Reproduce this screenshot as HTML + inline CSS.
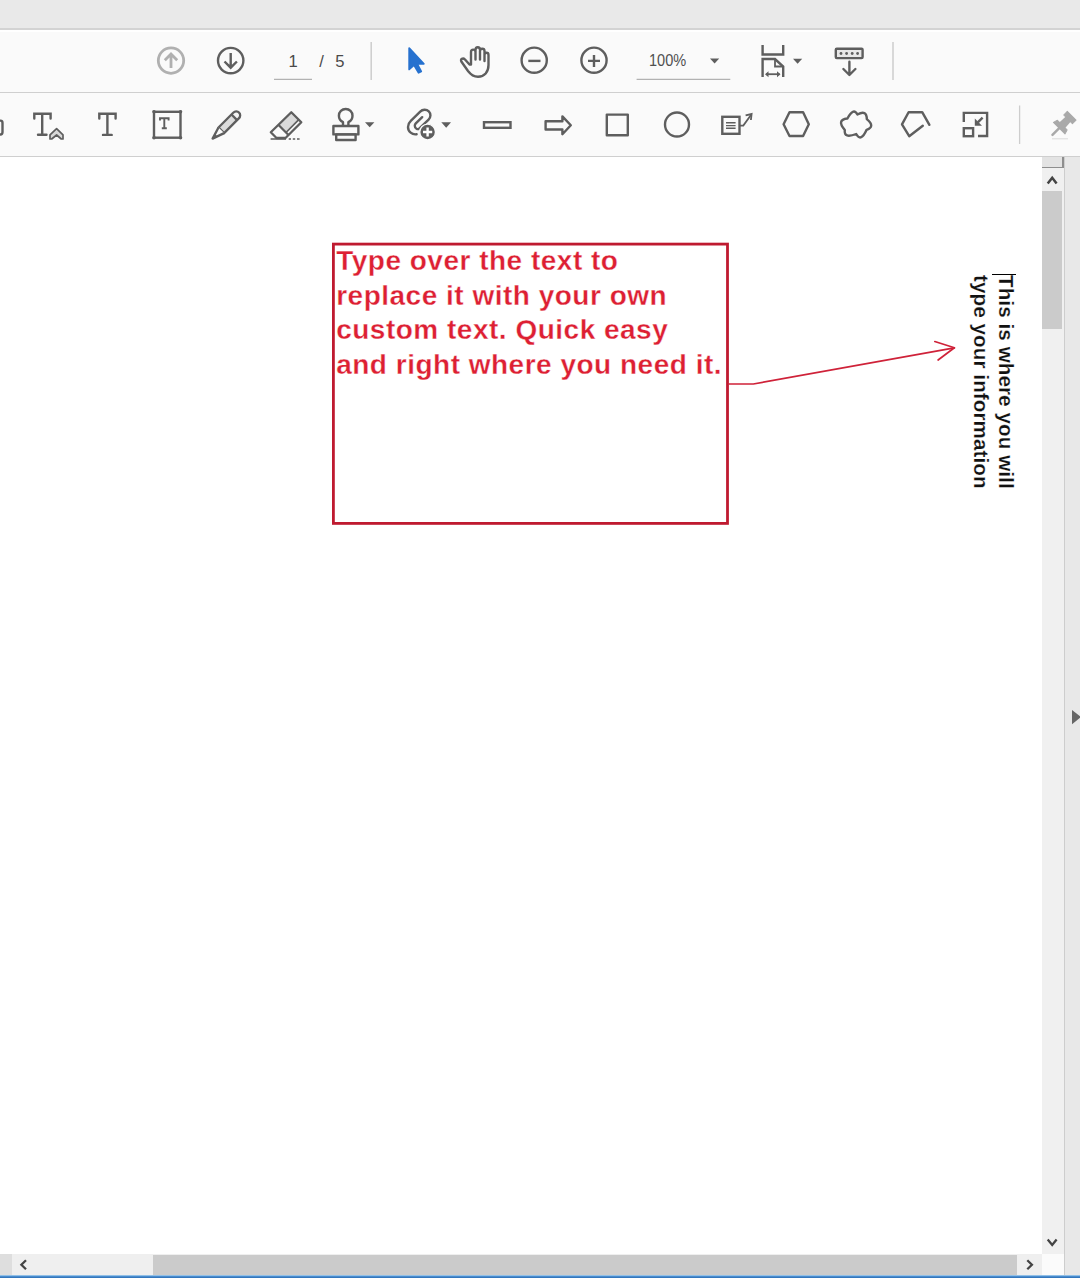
<!DOCTYPE html>
<html><head><meta charset="utf-8">
<style>
html,body{margin:0;padding:0;width:1080px;height:1278px;overflow:hidden;background:#fff;font-family:"Liberation Sans",sans-serif;}
.a{position:absolute;}
#top{left:0;top:0;width:1080px;height:28px;background:#e9e9e9;}
#tb1{left:0;top:28px;width:1080px;height:64px;background:#fafafa;border-top:2px solid #d3d3d3;box-sizing:border-box;}
#tb2{left:0;top:92px;width:1080px;height:65px;background:#fafafa;border-top:1.5px solid #cfcfcf;border-bottom:1.5px solid #cfcfcf;box-sizing:border-box;}
svg{position:absolute;left:0;top:0;overflow:visible;}
.ic{fill:none;stroke:#5e5e5e;stroke-width:2.4;}
.txt{color:#474747;font-size:16px;}
</style></head><body>
<div id="top" class="a"></div>
<div id="tb1" class="a"></div>
<div class="a" style="left:0;top:30px;width:1080px;height:1.5px;background:#fff;"></div>
<div id="tb2" class="a"></div>

<!-- toolbar icons -->
<svg width="1080" height="160" viewBox="0 0 1080 160">
  <!-- up arrow disabled -->
  <g stroke="#b0b0b0" stroke-width="2.8" fill="none">
    <circle cx="171" cy="60.6" r="12.7"/>
    <path d="M171 54.5v13.5M164.8 60.2l6.2-6.2 6.2 6.2"/>
  </g>
  <!-- down arrow -->
  <g class="ic" stroke-width="2.8" stroke="#575757">
    <circle cx="230.7" cy="60.6" r="12.7"/>
    <path d="M230.7 53v14M224.5 61.5l6.2 6.2 6.2-6.2"/>
  </g>
  <!-- page field underline -->
  <path d="M274 79.3H312" stroke="#a0a0a0" stroke-width="1"/>
  <!-- separator -->
  <path d="M371.2 42V80" stroke="#cdcdcd" stroke-width="1.5"/>
  <!-- blue pointer -->
  <path d="M409.2 48.2V69.4L414 65L418.6 72.8L421.2 71.5L417.2 63.8H423.8Z" fill="#2671cf" stroke="#2671cf" stroke-width="1.8" stroke-linejoin="round"/>
  <!-- hand -->
  <g class="ic" stroke-width="2.3" stroke-linecap="round" stroke-linejoin="round">
    <path d="M469.5 64.5 L465 59.5 C463 57.5 459.8 59 461.5 61.8 L468 71 C471 75 474 76.7 478 76.7 C484.5 76.7 488.5 72 488.5 65 V55 C488.5 52 484.5 52 484.5 55 V61 M484.5 61 V51 C484.5 48 480 48 480 51 V59.5 M480 50 C480 46.3 475.5 46.3 475.5 50 V59.5 M475.5 52 C475.5 48.8 471 48.8 471 52 V64.5"/>
  </g>
  <!-- zoom out -->
  <g class="ic" stroke-width="2.8">
    <circle cx="534.2" cy="60.2" r="12.6"/>
    <path d="M528.3 60.9H540.5"/>
  </g>
  <!-- zoom in -->
  <g class="ic" stroke-width="2.8">
    <circle cx="594" cy="60.2" r="12.6"/>
    <path d="M588 60.9H600M594 55V67"/>
  </g>
  <!-- zoom dropdown -->
  <path d="M710 58.4H719.2L714.6 63.6Z" fill="#5e5e5e"/>
  <path d="M636.6 79.3H730.3" stroke="#a0a0a0" stroke-width="1"/>
  <!-- page display icon -->
  <g class="ic" stroke-width="2.4">
    <path d="M762.6 45V54.5H783.2V45"/>
    <path d="M762.6 77V59H775L783.2 66.5V77"/>
    <path d="M775 59V66.5H783.2" stroke-width="1.8"/>
    <path d="M766 74.2H779.5" stroke-width="1.8"/>
  </g>
  <path d="M765 74.2l3.5-3v6z M780.5 74.2l-3.5-3v6z" fill="#5e5e5e"/>
  <path d="M793 58.8H802.2L797.6 63.8Z" fill="#5e5e5e"/>
  <!-- scroll icon -->
  <g class="ic" stroke-width="2.5" stroke-linecap="round" stroke-linejoin="round">
    <rect x="835.8" y="48.8" width="26.8" height="9.3" rx="1" fill="#e8e8e8"/>
    <path d="M849.4 61.8V74.6M843.4 69l6 6 6-6"/>
  </g>
  <g fill="#5e5e5e"><circle cx="841" cy="53.5" r="1.4"/><circle cx="846.6" cy="53.5" r="1.4"/><circle cx="852.2" cy="53.5" r="1.4"/><circle cx="857.6" cy="53.5" r="1.4"/></g>
  <path d="M893 42V80" stroke="#cdcdcd" stroke-width="1.5"/>

  <!-- ===== row 2 ===== -->
  <!-- partial icon at left edge -->
  <path d="M-3 120.6H0.5C2 120.6 2.5 121.6 2.5 123.1V132C2.5 133.5 2 134.5 0.5 134.5H-3" class="ic" stroke-width="2.7"/>
  <!-- T with caret -->
  <g class="ic" stroke-width="2.6">
    <path d="M34.3 118.6V113.8H50.6V118.6M42.2 113.8V134.7M38 134.7H46.5" stroke-linecap="round"/>
  </g>
  <path d="M50 139V134.9L56.6 128.7L63 134.9V139H61.3L56.6 135L51.7 139Z" fill="#d8d8d8" stroke="#5e5e5e" stroke-width="1.7" stroke-linejoin="round"/>
  <!-- T -->
  <g class="ic" stroke-width="2.6">
    <path d="M99.3 118.6V113.8H115.6V118.6M107.4 113.8V134.9M103 134.9H111.7" stroke-linecap="round"/>
  </g>
  <!-- textbox -->
  <g class="ic" stroke-width="2.4">
    <rect x="154" y="111.8" width="26.5" height="25.9"/>
    <path d="M160 120.5V118.3H168.6V120.5M164.3 118.3V128.3M161.8 128.3H166.8" stroke-width="1.9"/>
  </g>
  <g fill="#5e5e5e"><circle cx="154" cy="111.8" r="1.8"/><circle cx="180.5" cy="111.8" r="1.8"/><circle cx="154" cy="137.7" r="1.8"/><circle cx="180.5" cy="137.7" r="1.8"/></g>
  <!-- pencil -->
  <path d="M218.5 127.5L233.2 112.8C235 111 237.6 111 239 112.6C240.6 114 240.6 116.6 238.8 118.4L224.1 133.1Z" fill="#dcdcdc"/>
  <path d="M231.5 114.5L233.2 112.8C235 111 237.6 111 239 112.6C240.6 114 240.6 116.6 238.8 118.4L237.1 120.1Z" fill="#f4f4f4"/>
  <g stroke="#5e5e5e" stroke-width="2.3" stroke-linejoin="round" fill="none">
    <path d="M218.5 127.5L233.2 112.8C235 111 237.6 111 239 112.6C240.6 114 240.6 116.6 238.8 118.4L224.1 133.1Z"/>
    <path d="M218.5 127.5L212.6 138.6L224.1 133.1" fill="#fafafa"/>
    <path d="M231.5 114.5L237.1 120.1"/>
  </g>
  <path d="M212.6 138.6L215 134L217.2 136.2Z" fill="#5e5e5e"/>
  <!-- eraser -->
  <path d="M278.3 124.8L291.3 112.2L298.8 119.7L286 132.5Z" fill="#dadada"/>
  <g stroke="#5e5e5e" stroke-width="2.3" stroke-linejoin="round" fill="none">
    <path d="M291.3 112.2L301.3 122.2L285.5 138H276.5L270.8 132.3Z"/>
    <path d="M278.3 124.8L288.5 135"/>
    <path d="M298.8 119.7L286 132.5" stroke-width="1.7"/>
  </g>
  <path d="M270.6 138.9H286M288.7 138.9H291M292.8 138.9H295.2M297 138.9H299.6" stroke="#5e5e5e" stroke-width="1.5"/>
  <!-- stamp -->
  <g class="ic" stroke-width="2.3" stroke-linejoin="round">
    <path d="M343 125.5V122.2C340.3 120.9 338.9 118.5 338.9 115.8C338.9 111.8 341.9 109 345.7 109C349.5 109 352.5 111.8 352.5 115.8C352.5 118.5 351.1 120.9 348.4 122.2V125.5"/>
    <rect x="333.4" y="126" width="25" height="8.4"/>
    <rect x="336.2" y="134.4" width="19.4" height="5.6"/>
  </g>
  <path d="M365 122.2H374.4L369.7 127.3Z" fill="#5e5e5e"/>
  <!-- attach -->
  <g class="ic" stroke-width="2.3" stroke-linecap="round" stroke-linejoin="round">
    <path d="M416.6 134.2C412.2 135 408 131.6 408 127C408 124.6 409 122.6 410.8 120.9L420.2 111.6C422.6 109.2 426.4 109 428.8 111.3C431.1 113.6 430.9 117.3 428.6 119.6L419.2 128.6C417.8 129.9 414.8 128.6 414.8 125.8C414.8 124.8 415.2 124 415.8 123.4L422.2 117.2"/>
  </g>
  <circle cx="427.6" cy="132" r="7.9" fill="#5e5e5e" stroke="#fafafa" stroke-width="1.4"/>
  <path d="M427.6 127.4V136.6M423 132H432.2" stroke="#fff" stroke-width="2.4"/>
  <path d="M441.3 122.3H451L446.2 127.7Z" fill="#5e5e5e"/>
  <!-- line -->
  <rect x="484" y="122.2" width="26.5" height="5.6" class="ic" stroke-width="2.4"/>
  <!-- arrow -->
  <path d="M545.6 121.2H562.4V116.4L570.8 125.3L562.4 134.2V129.5H545.6Z" class="ic" stroke-width="2.5" stroke-linejoin="round"/>
  <!-- square -->
  <rect x="606.8" y="114.6" width="21" height="20.6" class="ic" stroke-width="2.5" stroke-linejoin="round"/>
  <!-- circle -->
  <circle cx="677" cy="124.5" r="12" class="ic" stroke-width="2.4"/>
  <!-- callout -->
  <g class="ic" stroke-width="2.4">
    <rect x="722.3" y="116.8" width="17.2" height="17"/>
    <path d="M726 122.8H735.6M726 125.6H735.6M726 128.3H735.6" stroke-width="1.4"/>
    <path d="M739.5 125.6H743.3L751.3 114.4" stroke-width="1.8"/>
    <path d="M745.6 115.4L751.6 114L750.9 120" stroke-width="1.8" stroke-linejoin="miter"/>
  </g>
  <!-- hexagon -->
  <path d="M789.5 112.3H803.1L808.8 124.2L803.1 136H789.5L783.6 124.2Z" class="ic" stroke-width="2.4" stroke-linejoin="round"/>
  <!-- cloud -->
  <path d="M847.4 118.5Q853.3 107.1 857.4 114.5Q866.7 109.5 866.8 119.1Q875.7 126.4 866.6 129.8Q861.0 142.5 856.2 134.0Q843.7 138.9 844.8 130.1Q836.1 119.8 847.4 118.5Z" class="ic" stroke-width="2.4" stroke-linejoin="round"/>
  <!-- polyline -->
  <path d="M929.4 124.8L922.2 112.2H908.6L902 124.4L909.2 136.2L922.8 125.8" class="ic" stroke-width="2.5" stroke-linejoin="round" stroke-linecap="round"/>
  <!-- shrink icon -->
  <g class="ic" stroke-width="2.4">
    <path d="M963.8 122V112.9H987.1V136H978"/>
    <rect x="963.8" y="128.2" width="9.3" height="8"/>
    <path d="M982.6 117.6L977.8 122.4" stroke-width="2.4"/>
  </g>
  <path d="M974.8 118.6V125.8H982Z" fill="#5e5e5e"/>
  <!-- separator -->
  <path d="M1019.6 105.5V144" stroke="#cdcdcd" stroke-width="1.3"/>
  <!-- pin -->
  <g transform="translate(1051.8 135.6) rotate(45) scale(0.95)" fill="#a9a9a9">
    <path d="M0 -1V-11" stroke="#a9a9a9" stroke-width="2.6" stroke-linecap="round"/>
    <path d="M-8.6 -11H8.6L7.2 -15.6H-7.2Z" stroke="#a9a9a9" stroke-width="1" stroke-linejoin="round"/>
    <path d="M-4.3 -15H4.3L3.7 -25H-3.7Z"/>
    <path d="M-6.5 -24.2H6.5V-29.6H-6.5Z" stroke="#a9a9a9" stroke-width="1" stroke-linejoin="round"/>
  </g>
  <path d="M1052 138.8H1068" stroke="#dadada" stroke-width="1"/>
</svg>

<!-- scrollbars & right strip -->
<div class="a" style="left:1041.5px;top:157px;width:22.5px;height:1097px;background:#f0f0f0;"></div>
<div class="a" style="left:1041.5px;top:157px;width:21.5px;height:10.5px;background:#e3e3e3;border-bottom:1.5px solid #8e8e8e;box-sizing:border-box;"></div>
<div class="a" style="left:1062.3px;top:157px;width:1.5px;height:10.5px;background:#8e8e8e;"></div>
<div class="a" style="left:1042px;top:191.2px;width:20px;height:138.2px;background:#cbcbcb;"></div>
<div class="a" style="left:1063.8px;top:157px;width:1.4px;height:1121px;background:#cdcdcd;"></div>
<div class="a" style="left:1065px;top:157px;width:15px;height:1121px;background:#e8e8e8;"></div>
<div class="a" style="left:0;top:1254px;width:1042px;height:21px;background:#efefef;"></div>
<div class="a" style="left:0;top:1254px;width:12px;height:21px;background:#dedede;"></div>
<div class="a" style="left:153px;top:1254.5px;width:864px;height:20px;background:#cbcbcb;"></div>
<div class="a" style="left:1042px;top:1254px;width:21.5px;height:21px;background:#fbfbfb;"></div>
<div class="a" style="left:0;top:1274.8px;width:1080px;height:3.2px;background:linear-gradient(#b9dcf5,#4c8fd0 45%,#2a6cb3);"></div>
<svg width="1080" height="1278" viewBox="0 0 1080 1278">
  <path d="M1047.7 183.5L1052.2 177.8L1056.6 183.5" fill="none" stroke="#444" stroke-width="2.5"/>
  <path d="M1047.7 1239.6L1052.2 1245L1056.6 1239.6" fill="none" stroke="#444" stroke-width="2.3"/>
  <path d="M26 1260.2L21.4 1264.7L26 1269.2" fill="none" stroke="#444" stroke-width="2.3"/>
  <path d="M1027.3 1260.2L1031.9 1264.7L1027.3 1269.2" fill="none" stroke="#444" stroke-width="2.3"/>
  <path d="M1072 710L1081 717L1072 724.2Z" fill="#666"/>

  <!-- red text box -->
  <rect x="333.4" y="244.1" width="394.1" height="279.3" fill="none" stroke="#bf1a30" stroke-width="2.8"/>
  <!-- arrow -->
  <g fill="none" stroke="#cf2239" stroke-width="1.7" stroke-linecap="round" stroke-linejoin="round">
    <path d="M729 384H753.3L954.4 347.8"/>
    <path d="M934.8 341.5L954.4 347.8L938.1 360"/>
  </g>
</svg>

<div class="a" id="redtxt" style="left:336.2px;top:243.8px;-webkit-text-stroke:0.3px #fff;paint-order:normal;font-weight:bold;font-size:28px;line-height:34.73px;letter-spacing:0.5px;color:#dd1f33;white-space:pre;">Type over the text to
replace it with your own
custom text. Quick easy
and right where you need it.</div>

<div class="a" id="rot" style="left:1018.3px;top:274.8px;-webkit-text-stroke:0.2px #fff;transform-origin:0 0;transform:rotate(90deg);font-weight:bold;font-size:20.6px;line-height:24.5px;letter-spacing:0.09px;color:#111;white-space:pre;">This is where you will
type your information</div>
<div class="a" style="left:992px;top:274.1px;width:24px;height:1.3px;background:#000;"></div>

<div class="a txt" style="left:288.6px;top:52.3px;font-size:16.6px;color:#4a4a4a;">1</div>
<div class="a txt" style="left:319.3px;top:52.3px;font-size:16.6px;color:#4a4a4a;">/</div>
<div class="a txt" style="left:335.2px;top:52.3px;font-size:16.6px;color:#4a4a4a;">5</div>
<div class="a txt" style="left:648.8px;top:51.1px;font-size:17px;transform-origin:0 0;transform:scaleX(0.855);color:#505050;">100%</div>

</body></html>
